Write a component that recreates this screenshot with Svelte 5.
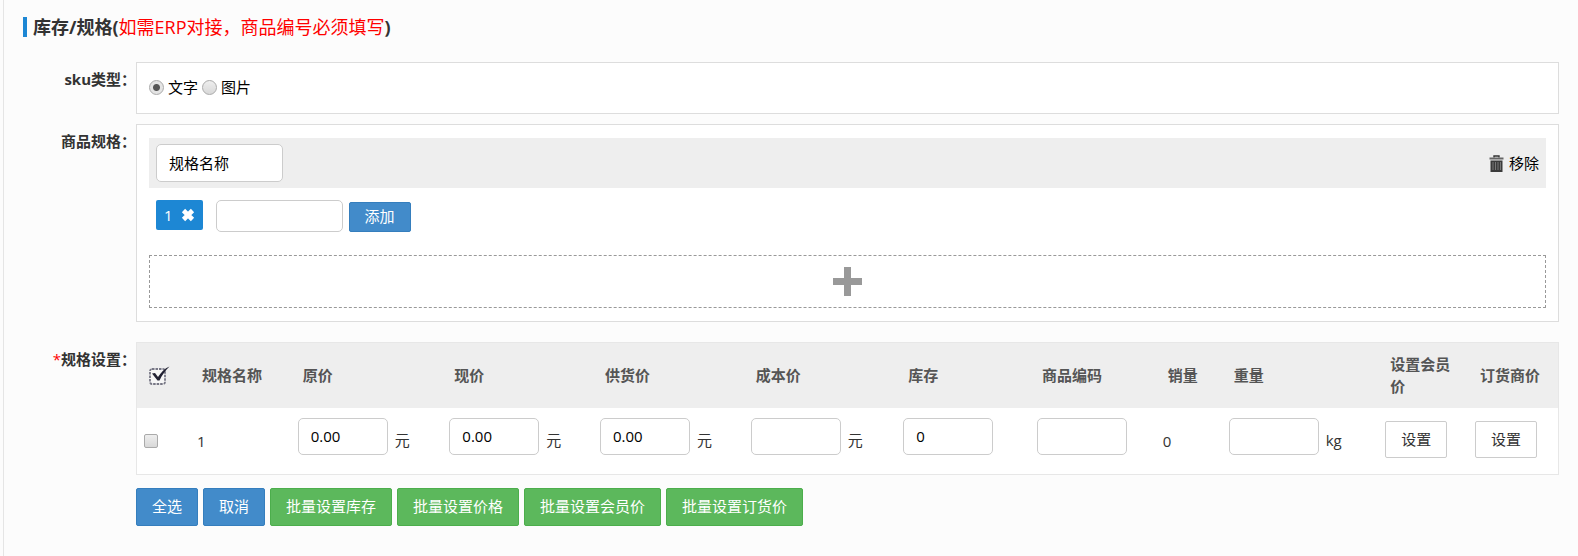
<script>
    const columns = [
        { key: 'name', title: '规格名称', width: 101 },
        { key: 'price', title: '原价', width: 152, unit: '元' },
        { key: 'current', title: '现价', width: 151, unit: '元' },
        { key: 'supply', title: '供货价', width: 151, unit: '元' },
        { key: 'cost', title: '成本价', width: 153, unit: '元' },
        { key: 'stock', title: '库存', width: 134, unit: '' },
        { key: 'code', title: '商品编码', width: 126, unit: '' },
        { key: 'sold', title: '销量', width: 66 },
        { key: 'weight', title: '重量', width: 157, unit: 'kg' },
        { key: 'member', title: '设置会员价', width: 90, action: true },
        { key: 'dealer', title: '订货商价', width: 88, action: true }
    ]
    const checkWidth = 55
    const total = columns.reduce((sum, c) => sum + c.width, checkWidth)

    const batchActions = ['批量设置库存', '批量设置价格', '批量设置会员价', '批量设置订货价']

    let skuType = $state('text')
    let specName = $state('规格名称')
    let newValue = $state('')
    let values = $state(['1'])
    let rows = $state([
        {
            checked: false, name: '1', price: '0.00', current: '0.00', supply: '0.00',
            cost: '', stock: '0', code: '', sold: '0', weight: ''
        }
    ])

    function addValue() {
        if (!newValue) return
        values.push(newValue)
        newValue = ''
    }

    function checkAll(checked) {
        rows.forEach(row => row.checked = checked)
    }
</script>

<div class="page">
    <h2>库存/规格(<span>如需ERP对接，商品编号必须填写</span>)</h2>

    <div class="row">
        <div class="label" id="sku-label">sku类型：</div>
        <div class="panel types" role="radiogroup" aria-labelledby="sku-label">
            <label><input type="radio" name="sku" value="text" bind:group={skuType}>文字</label>
            <label><input type="radio" name="sku" value="image" bind:group={skuType}>图片</label>
        </div>
    </div>

    <div class="row">
        <label class="label" for="spec-name">商品规格：</label>
        <div class="panel">
            <div class="spec-head">
                <input id="spec-name" class="text wide" type="text" bind:value={specName}>
                <button class="remove" type="button">
                    <svg width="15" height="17" viewBox="0 0 15 17" aria-hidden="true">
                        <path d="M5 2.5V1h5v1.5" fill="none" stroke="#333" stroke-width="1.4" />
                        <path d="M0.5 2.5h14v2h-14z" fill="#666" />
                        <path d="M1.5 5.5h12V17h-12z" fill="#3a3a3a" />
                        <path d="M4 7v8M6.5 7v8M9 7v8M11.500 7v8" stroke="#777" stroke-width="1" />
                    </svg>
                    移除
                </button>
            </div>
            <div class="spec-values">
                {#each values as value, i}
                    <span class="tag">
                        {value}
                        <button type="button" aria-label="删除" onclick={() => values.splice(i, 1)}>
                            <svg width="14" height="14" viewBox="0 0 14 14" aria-hidden="true">
                                <path d="M2.500 2.500l9 9M11.500 2.500l-9 9" stroke="#fff" stroke-width="4.600" />
                            </svg>
                        </button>
                    </span>
                {/each}
                <input class="text wide short" type="text" aria-label="规格值" bind:value={newValue}>
                <button class="btn primary small" type="button" onclick={addValue}>添加</button>
            </div>
            <button class="add-spec" type="button" aria-label="添加规格">
                <svg width="29" height="29" viewBox="0 0 29 29" aria-hidden="true">
                    <path d="M11 0h7v11h11v7H18v11h-7V18H0v-7h11z" fill="#999" />
                </svg>
            </button>
        </div>
    </div>

    <div class="row settings">
        <div class="label"><em>*</em>规格设置：</div>
        <div class="content">
            <table>
                <colgroup>
                    <col style="width: {checkWidth / total * 100}%">
                    {#each columns as c}
                        <col style="width: {c.width / total * 100}%">
                    {/each}
                </colgroup>
                <thead>
                    <tr>
                        <th class="check">
                            <button class="check-all" type="button" aria-label="全选" onclick={() => checkAll(true)}>
                                <svg width="21" height="20" viewBox="0 0 21 20" aria-hidden="true">
                                    <rect x="1" y="3" width="15" height="15" rx="2" fill="#f6f6f6" stroke="#777785" stroke-width="1.800" stroke-dasharray="2.500 1" />
                                    <path d="M3 7.500L6 7l3 4C12 6.500 15.500 2.500 20.500 0.500 16.500 4.500 13 9 10.500 14.500H8.500z" fill="#223" />
                                </svg>
                            </button>
                        </th>
                        {#each columns as c}
                            <th>{c.title}</th>
                        {/each}
                    </tr>
                </thead>
                <tbody>
                    {#each rows as row}
                        <tr>
                            <td class="check"><input type="checkbox" aria-label="选择" bind:checked={row.checked}></td>
                            {#each columns as c}
                                <td>
                                    {#if c.action}
                                        <button class="btn plain" type="button">设置</button>
                                    {:else if c.unit !== undefined}
                                        <label class="field">
                                            <input class="text" type="text" aria-label={c.title} bind:value={row[c.key]}>
                                            <span>{c.unit}</span>
                                        </label>
                                    {:else}
                                        {row[c.key]}
                                    {/if}
                                </td>
                            {/each}
                        </tr>
                    {/each}
                </tbody>
            </table>
            <div class="actions">
                <button class="btn primary" type="button" onclick={() => checkAll(true)}>全选</button>
                <button class="btn primary" type="button" onclick={() => checkAll(false)}>取消</button>
                {#each batchActions as action}
                    <button class="btn success" type="button">{action}</button>
                {/each}
            </div>
        </div>
    </div>
</div>

<style>
    :global(body) {
        background: #fcfcfc;
    }

    .page {
        box-sizing: border-box;
        min-height: 100vh;
        margin-left: 3px;
        padding: 17px 19px 30px;
        border-left: 1px solid #e5e5e5;
        color: #333;
        font: 15px/22px "Open Sans", "Noto Sans CJK SC", sans-serif;
    }

    .page * {
        box-sizing: border-box;
    }

    button, input {
        font: inherit;
        color: inherit;
        margin: 0;
    }

    button {
        padding: 0;
        border: 0;
        background: none;
        cursor: pointer;
        white-space: nowrap;
    }

    svg {
        display: block;
    }

    h2 {
        margin: 0 0 25px;
        padding-left: 6px;
        border-left: 4px solid #1d87d4;
        font-size: 18px;
        line-height: 20px;
    }

    h2 span {
        color: #f00;
        font-weight: normal;
    }

    .row {
        display: flex;
        margin-bottom: 10px;
    }

    .label {
        flex: none;
        width: 113px;
        padding-top: 6px;
        font-weight: bold;
        text-align: right;
    }

    .label em {
        color: #f00;
        font-style: normal;
        font-weight: normal;
    }

    .panel {
        flex: 1;
        padding: 13px 12px;
        border: 1px solid #ddd;
        background: #fff;
        color: #000;
    }

    .types {
        display: flex;
        gap: 4px;
        padding-bottom: 15px;
    }

    .types label {
        display: flex;
        align-items: center;
        gap: 4px;
    }

    input[type="radio"], input[type="checkbox"] {
        appearance: none;
        width: 15px;
        height: 15px;
        border: 1px solid #aaa;
        border-radius: 50%;
        background: linear-gradient(#eee, #d8d8d8);
    }

    input[type="radio"]:checked {
        background: radial-gradient(circle, #555 0 3px, #e4e4e4 4px);
    }

    input[type="checkbox"] {
        display: block;
        width: 14px;
        height: 14px;
        border-radius: 2px;
    }

    input[type="checkbox"]:checked {
        background: #555;
    }

    .text {
        width: 90px;
        height: 37px;
        padding: 0 12px 2px;
        border: 1px solid #ccc;
        border-radius: 5px;
        background: #fff;
        color: #000;
    }

    .wide {
        width: 127px;
        height: 38px;
    }

    .short {
        height: 32px;
    }

    .spec-head {
        display: flex;
        justify-content: space-between;
        align-items: center;
        height: 50px;
        padding: 0 7px;
        background: #eee;
    }

    .remove {
        display: flex;
        align-items: center;
        gap: 5px;
    }

    .spec-values {
        display: flex;
        align-items: flex-end;
        gap: 6px;
        padding: 12px 7px 23px;
    }

    .tag {
        display: flex;
        align-items: center;
        align-self: flex-start;
        gap: 8px;
        height: 30px;
        margin-right: 7px;
        padding: 0 8px;
        border-radius: 2px;
        background: #1d87d4;
        color: #fff;
    }

    .btn {
        height: 38px;
        padding: 0 15px 2px;
        border: 1px solid;
        border-radius: 2px;
    }

    .primary {
        border-color: #357ebd;
        background: #428bca;
        color: #fff;
    }

    .success {
        border-color: #4cae4c;
        background: #5cb85c;
        color: #fff;
    }

    .small {
        height: 30px;
    }

    .plain {
        height: 37px;
        margin-bottom: 3px;
        border-color: #ccc;
        background: #fff;
        color: #333;
    }

    .add-spec {
        display: flex;
        justify-content: center;
        width: 100%;
        height: 53px;
        padding-top: 11px;
        border: 1px dashed #999;
    }

    .settings {
        margin-top: 20px;
    }

    .content {
        flex: 1;
    }

    table {
        width: 100%;
        table-layout: fixed;
        border: 1px solid #e7e7e7;
        border-spacing: 0;
        background: #fff;
    }

    th {
        height: 65px;
        padding: 0 10px 2px;
        background: #eee;
        color: #555;
        text-align: left;
    }

    td {
        height: 66px;
        padding: 0 5px;
    }

    th.check {
        padding: 0 0 0 12px;
    }

    td.check {
        padding-left: 7px;
    }

    .check-all {
        display: block;
    }

    .field {
        display: flex;
        align-items: center;
        gap: 7px;
        margin-bottom: 9px;
    }

    .field span {
        margin-top: 6px;
    }

    .actions {
        display: flex;
        flex-wrap: wrap;
        gap: 5px;
        margin-top: 13px;
    }
</style>
